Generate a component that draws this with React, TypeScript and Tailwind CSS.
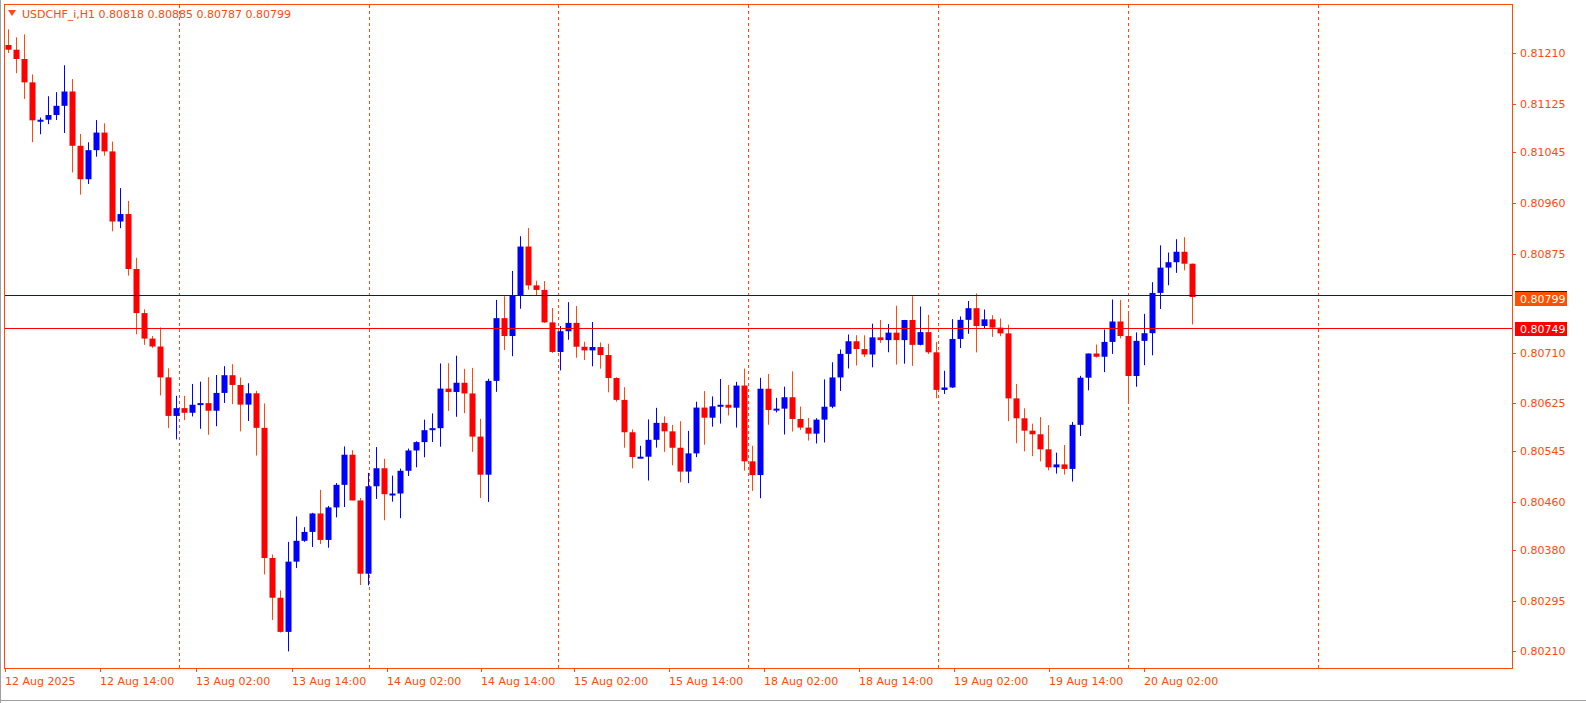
import React from "react";

const keys: [number, number][] = [
  [8, 50],[20, 75],[30, 125],[40, 115],[50, 125],[60, 90],[68, 120],[75, 185],[82, 190],[90, 130],[100, 110],[110, 210],[125, 235],[133, 295],[140, 330],[150, 340],[165, 400],[185, 415],[200, 410],[215, 385],[245, 400],[258, 435],[265, 580],[280, 620],[290, 560],[300, 520],[320, 530],[345, 460],[360, 570],[370, 480],[390, 490],[410, 460],[440, 400],[460, 380],[480, 460],[495, 315],[505, 330],[520, 260],[535, 280],[548, 340],[570, 330],[590, 345],[610, 390],[640, 465],[660, 430],[680, 460],[700, 410],[720, 415],[740, 375],[748, 520],[760, 400],[790, 410],[820, 430],[835, 360],[850, 345],[880, 355],[900, 330],[920, 330],[940, 400],[950, 335],[970, 320],[1000, 345],[1010, 415],[1030, 430],[1045, 470],[1065, 460],[1080, 370],[1100, 345],[1120, 330],[1130, 370],[1150, 300],[1170, 255],[1190, 285],[1199, 297],
];

function interp(x: number) {
  for (let i = 0; i < keys.length - 1; i++) {
    const [x0, y0] = keys[i];
    const [x1, y1] = keys[i + 1];
    if (x >= x0 && x <= x1) return y0 + ((y1 - y0) * (x - x0)) / (x1 - x0 || 1);
  }
  return keys[keys.length - 1][1];
}

let seed = 7;
const rnd = () => {
  seed = (seed * 9301 + 49297) % 233280;
  return seed / 233280;
};

type C = { x: number; o: number; c: number; h: number; l: number };
const candles: C[] = [];
let prev = 45;
for (let x = 8; x <= 1199; x += 8) {
  const c = x >= 1192 ? 297 : interp(x) + (rnd() - 0.5) * 30;
  const o = prev;
  const h = Math.min(o, c) - rnd() * 28;
  const l = Math.max(o, c) + rnd() * 28;
  candles.push({ x, o, c, h, l });
  prev = c;
}

const grid = [179, 369, 558, 748, 938, 1128, 1318];
const prices: [string, number][] = [
  ["0.81210", 53],["0.81125", 104],["0.81045", 152],["0.80960", 203],["0.80875", 254],["0.80710", 353],["0.80625", 403],["0.80545", 451],["0.80460", 502],["0.80380", 550],["0.80295", 601],["0.80210", 651],
];
const dates: [string, number][] = [
  ["12 Aug 2025", 5],["12 Aug 14:00", 100],["13 Aug 02:00", 196],["13 Aug 14:00", 292],["14 Aug 02:00", 387],["14 Aug 14:00", 481],["15 Aug 02:00", 574],["15 Aug 14:00", 669],["18 Aug 02:00", 764],["18 Aug 14:00", 859],["19 Aug 02:00", 954],["19 Aug 14:00", 1049],["20 Aug 02:00", 1144],
];
const OR = "#ff4a0a";

export default function App() {
  return (
    <div className="relative w-[1586px] h-[703px] bg-white overflow-hidden">
      <svg width={1586} height={703} className="block max-w-none shrink-0" style={{ fontFamily: "'DejaVu Sans', sans-serif" }}>
        <line x1={0.5} x2={0.5} y1={0} y2={703} stroke="#a0a0a0" />
        <line x1={0} x2={1586} y1={700.5} y2={700.5} stroke="#a0a0a0" />
        <rect x={4.5} y={4.5} width={1508} height={664} fill="none" stroke={OR} />
        {grid.map((g) => (
          <line key={g} x1={g + 0.5} x2={g + 0.5} y1={5} y2={668} stroke={OR} strokeDasharray="3 3" />
        ))}
        <polygon points="8,10 16,10 12,16" fill={OR} />
        <text x={22} y={18} fontSize={11} fill={OR}>USDCHF_i,H1  0.80818 0.80885 0.80787 0.80799</text>
        {candles.map((k, i) => {
          const bull = k.c < k.o;
          const col = bull ? "#0000ff" : "#ff0000";
          const wick = bull ? "#0000ff" : OR;
          const top = Math.min(k.o, k.c);
          const hgt = Math.max(2, Math.abs(k.o - k.c));
          return (
            <g key={i}>
              <line x1={k.x + 0.5} x2={k.x + 0.5} y1={k.h} y2={k.l} stroke={wick} />
              <rect x={k.x - 2.5} y={top} width={6} height={hgt} fill={col} />
            </g>
          );
        })}
        <line x1={5} x2={1512} y1={295.5} y2={295.5} stroke="#0000ff" />
        <line x1={5} x2={1512} y1={328.5} y2={328.5} stroke="#ff0000" />
        {prices.map(([p, y]) => (
          <g key={p}>
            <line x1={1512} x2={1516} y1={y + 0.5} y2={y + 0.5} stroke={OR} />
            <text x={1520} y={y + 4} fontSize={11} fill={OR}>{p}</text>
          </g>
        ))}
        <rect x={1515} y={291} width={52} height={5} fill="#0000ff" />
        <rect x={1515} y={292} width={52} height={14} fill="#ff5000" />
        <text x={1520} y={303} fontSize={11} fill="#fff">0.80799</text>
        <rect x={1515} y={322} width={52} height={14} fill="#ff0000" />
        <text x={1520} y={333} fontSize={11} fill="#fff">0.80749</text>
        {dates.map(([d, x]) => (
          <g key={d}>
            <line x1={x + 0.5} x2={x + 0.5} y1={668} y2={672} stroke={OR} />
            <text x={x} y={685} fontSize={11} fill={OR}>{d}</text>
          </g>
        ))}
      </svg>
    </div>
  );
}
